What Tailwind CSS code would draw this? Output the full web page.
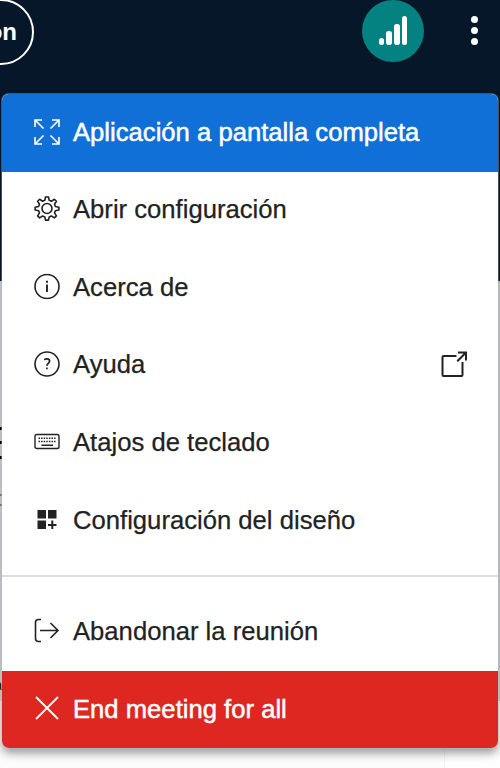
<!DOCTYPE html>
<html lang="es">
    <head>
        <meta charset="UTF-8" />
        <meta name="viewport" content="width=device-width, initial-scale=1.0" />
        <title>Opciones de la reunión</title>
        <script src="https://cdn.jsdelivr.net/npm/@tailwindcss/browser@4"></script>
    </head>
    <body
        class="relative h-[768px] w-[500px] overflow-hidden bg-[#fcfcfc] font-['Liberation_Sans',Arial,sans-serif] text-[#222]"
    >
        <!-- Barra superior -->
        <header class="flex h-[281px] items-start justify-between bg-[#06172a]">
            <div
                class="-ml-[62px] -mt-px flex h-[66px] w-24 items-center justify-end rounded-full border-2 border-white pr-[15px] text-[24px] font-bold text-white"
            >
                on
            </div>
            <div class="flex items-start">
                <button
                    class="flex size-[62px] items-center justify-center rounded-full bg-[#048281]"
                    aria-label="Estado de la conexión"
                >
                    <svg class="size-[30px]" viewBox="0 0 30 30" fill="white">
                        <rect x="1" y="22" width="5" height="7" rx="2.5" />
                        <rect x="8" y="15" width="6" height="14" rx="2.8" />
                        <rect x="16" y="8" width="6" height="21" rx="2.8" />
                        <rect x="24" y="0" width="5" height="29" rx="2.5" />
                    </svg>
                </button>
                <button
                    class="ml-[47px] mr-[22px] mt-4 flex flex-col gap-1"
                    aria-label="Opciones"
                >
                    <span class="size-[7px] rounded-full bg-white"></span>
                    <span class="size-[7px] rounded-full bg-white"></span>
                    <span class="size-[7px] rounded-full bg-white"></span>
                </button>
            </div>
        </header>

        <!-- Contenido detrás del menú -->
        <main class="flex h-[487px] justify-between">
            <div class="h-[420px] w-[3px] overflow-hidden bg-[#dcdfe2]">
                <div class="mt-[146px] h-[3px] bg-black"></div>
                <div class="mt-[11px] h-[3px] bg-black"></div>
                <div class="mt-3 h-[3px] bg-black"></div>
                <div class="mt-[35px] h-0.5 bg-[#888]"></div>
                <div class="mt-2 h-0.5 bg-[#888]"></div>
                <div class="-ml-1.5 mt-[171px] text-[15px] leading-4">a</div>
            </div>
            <div class="w-14 border-l border-[#f3f3f3] bg-[#fefefe]">
                <div class="ml-auto h-[420px] w-[3px] bg-[#d3d8dc]"></div>
            </div>
        </main>

        <!-- Menú de opciones -->
        <ul
            class="absolute left-0.5 top-[94px] h-[654px] w-[496px] overflow-hidden rounded-[7px] bg-white text-[25.65px] leading-none shadow-[0_0_0_1px_rgba(200,200,200,0.35),0_5px_10px_rgba(0,0,0,0.4)] [-webkit-text-stroke:0.25px_currentColor]"
        >
            <li class="flex h-[77.6px] items-center bg-[#1070d7] pl-[31.5px] text-white">
                <svg class="mr-[13.5px] size-[26px] -translate-y-px" viewBox="0 0 26 26" fill="none" stroke="currentColor" stroke-width="1.6">
                    <path d="M1 8V1h7M1 1l8.5 8.5M18 1h7v7M25 1l-8.5 8.5M1 18v7h7M1 25l8.5-8.5M18 25h7v-7M25 25l-8.5-8.5" />
                </svg>
                <span class="[-webkit-text-stroke:0.5px_white]">Aplicación a pantalla completa</span>
            </li>
            <li class="flex h-[77.6px] items-center pl-[31.5px]">
                <svg class="mr-[13.5px] size-[26px] -translate-y-[1.5px]" viewBox="0 0 26 26" fill="none" stroke="currentColor" stroke-width="1.6" stroke-linejoin="round">
                    <path d="M11.5 1.5h3l.7 3.3 2.2.9 3-1.9 2 2-1.9 3 .9 2.2 3.5.7v2.8l-3.5.7-.9 2.2 1.9 3-2 2-3-1.9-2.2.9-.7 3.2h-3l-.7-3.2-2.2-.9-3 1.900-2-2 1.900-3-.9-2.200-3.500-.7v-2.800l3.500-.7.9-2.200-1.900-3 2-2 3 1.900 2.200-.9z" />
                    <circle cx="13" cy="13" r="5" />
                </svg>
                <span class="-translate-y-px">Abrir configuración</span>
            </li>
            <li class="flex h-[77.6px] items-center pl-[31.5px]">
                <svg class="mr-[13.5px] size-[26px] -translate-y-[1.5px]" viewBox="0 0 26 26" fill="none" stroke="currentColor" stroke-width="1.6">
                    <circle cx="13" cy="13" r="12" />
                    <path d="M13 11v7.5M13 7.3v2" stroke-width="1.9" />
                </svg>
                <span>Acerca de</span>
            </li>
            <li class="flex h-[77.6px] items-center pl-[31.5px]">
                <svg class="mr-[13.5px] size-[26px] -translate-y-[2px]" viewBox="0 0 26 26" fill="none" stroke="currentColor" stroke-width="1.6">
                    <circle cx="13" cy="13" r="12" />
                    <path d="M10.3 8.800c1.200-1.200 5.300-1.500 5.300 1.300 0 2.200-2.700 2.200-2.700 4.600M12.900 16.400v1.900" stroke-width="1.7" />
                </svg>
                <span class="-translate-y-px">Ayuda</span>
                <svg class="ml-auto mr-[31.5px] size-[26px] -translate-y-0.5" viewBox="0 0 26 26" fill="none" stroke="currentColor" stroke-width="2">
                    <path d="M15.5 5H2.500a1 1 0 0 0-1 1v18a1 1 0 0 0 1 1h18a1 1 0 0 0 1-1V11" />
                    <path d="M17 1.500h8v8M25 1.500l-8.700 8.700" />
                </svg>
            </li>
            <li class="flex h-[77.6px] items-center pl-[31.5px]">
                <svg class="mr-[13.5px] size-[26px] -translate-y-[1.5px]" viewBox="0 0 26 26" fill="none" stroke="currentColor" stroke-width="1.4">
                    <rect x="1" y="6" width="24" height="14" rx="1.8" />
                    <path d="M4.5 9.700h17M4.500 12.900h17" stroke-width="1.5" stroke-dasharray="1.5 1.083" />
                    <path d="M7.500 16.700h11.500" />
                </svg>
                <span>Atajos de teclado</span>
            </li>
            <li class="flex h-[77.6px] items-center pl-[31.5px]">
                <svg class="mr-[13.5px] size-[26px] -translate-y-0.5" viewBox="0 0 26 26" fill="currentColor">
                    <path d="M3.5 4h8.500v8.500H3.500zM14 4h8.500v8.500H14zM3.500 14.500h8.500v8.500H3.500zM17.300 14.500h2v3.500H22.500v2h-3.200V23h-2v-3H14v-2h3.300z" />
                </svg>
                <span>Configuración del diseño</span>
            </li>
            <li class="mb-4 mt-[15.5px] h-0.5 bg-[#dcdcdc]"></li>
            <li class="flex h-[77.6px] items-center pl-[31.5px]">
                <svg class="mr-[13.5px] size-[26px] -translate-y-[1.5px]" viewBox="0 0 26 26" fill="none" stroke="currentColor" stroke-width="1.6">
                    <path d="M7 2H4.500Q1.500 2 1.500 5v16q0 3 3 3H7M6 13h18M16.500 5.500 24 13l-7.500 7.500" />
                </svg>
                <span>Abandonar la reunión</span>
            </li>
            <li class="flex h-[77.6px] items-center bg-[#df2721] pl-[31.5px] text-white">
                <svg class="mr-[13.5px] size-[26px] -translate-y-px" viewBox="0 0 26 26" fill="none" stroke="currentColor" stroke-width="1.8">
                    <path d="M2 2l22 22M24 2 2 24" />
                </svg>
                <span class="[-webkit-text-stroke:0.5px_white]">End meeting for all</span>
            </li>
        </ul>
    </body>
</html>
